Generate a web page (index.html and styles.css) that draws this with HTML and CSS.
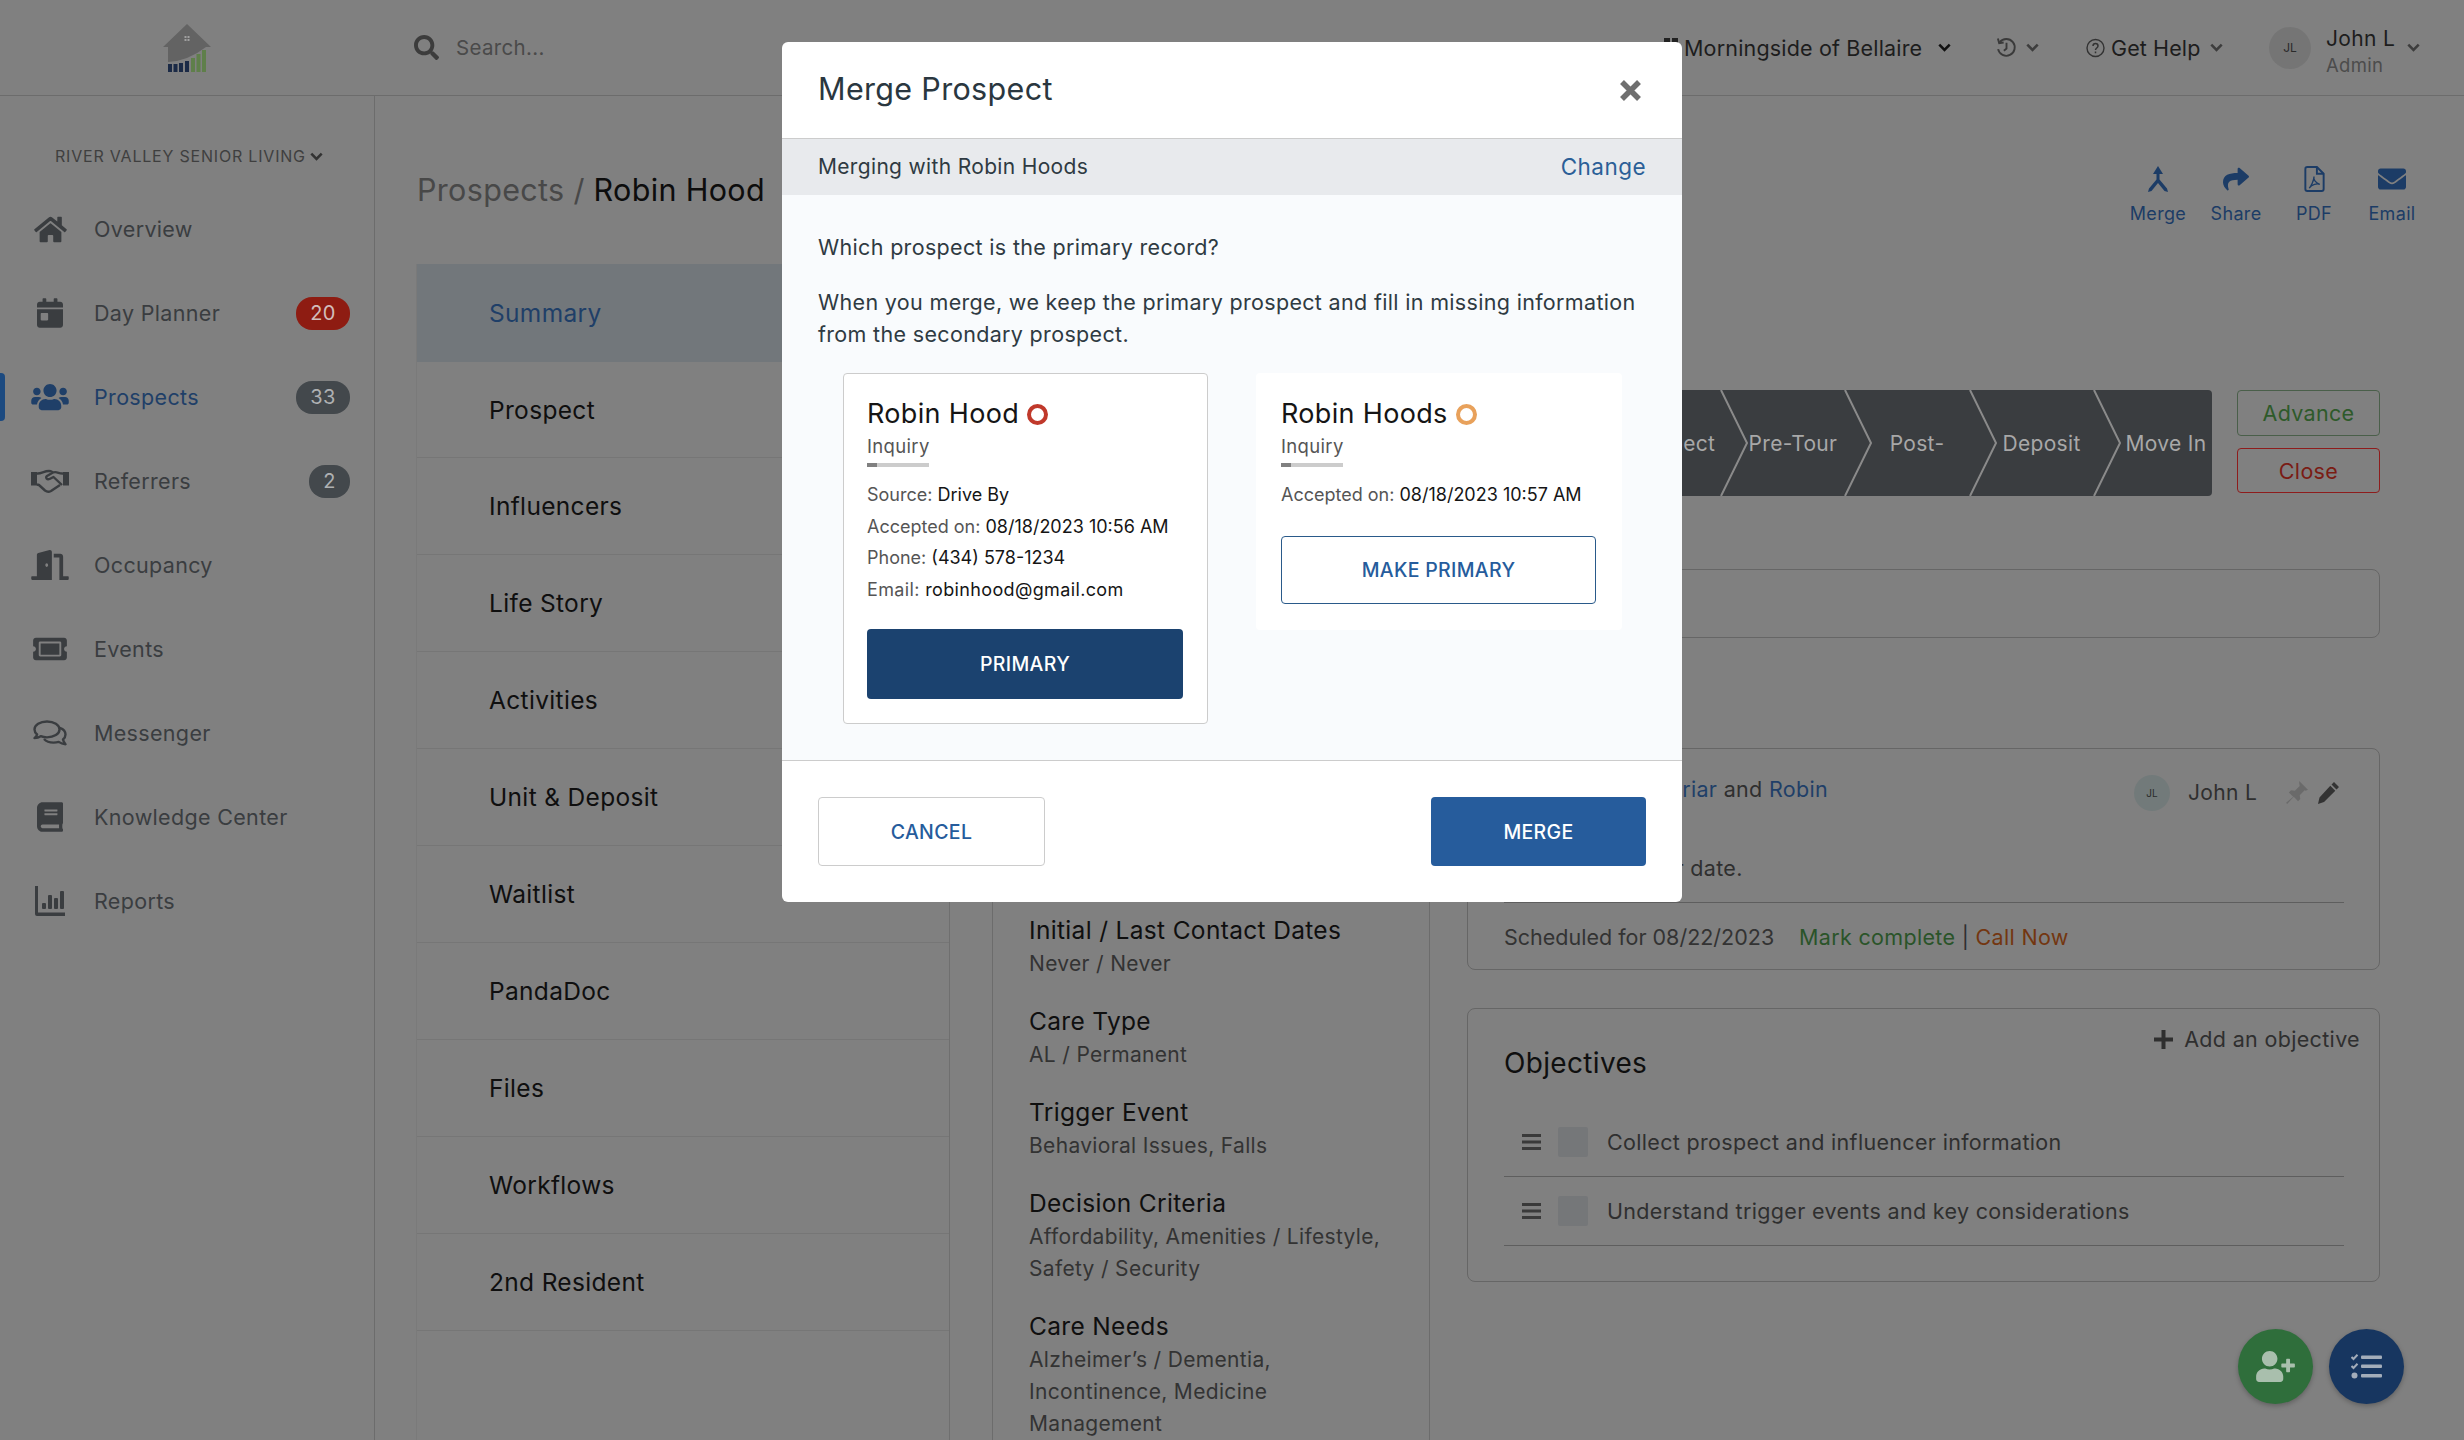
FILE: index.html
```html
<!DOCTYPE html>
<html lang="en">
<head>
<meta charset="utf-8">
<title>Merge Prospect</title>
<link rel="stylesheet" href="styles.css">
</head>
<body>
<svg class="sprite" aria-hidden="true"><symbol id="chev" viewBox="0 0 12 8"><path d="M1.2 1.4 6 6.200l4.800-4.800" fill="none" stroke="currentColor" stroke-width="2.400"/></symbol></svg>
<div class="app">
  <header class="topbar">
    <div class="logo">
      <svg width="80" height="65" viewBox="0 0 80 65"><path d="M37 9 13 32h5v15q20-1 38-15h5z" fill="#636363"/><g fill="#a0a0a0"><rect x="34.500" y="21" width="2" height="2"/><rect x="37.500" y="21" width="2" height="2"/><rect x="34.500" y="24" width="2" height="2"/><rect x="37.500" y="24" width="2" height="2"/></g><g fill="#1b2a46"><rect x="18" y="49" width="4" height="8"/><rect x="23.500" y="49" width="4" height="8"/><rect x="29" y="48" width="4" height="9"/><rect x="35" y="46" width="4" height="11"/></g><g fill="#5f7f4a"><rect x="41" y="43" width="4" height="14"/><rect x="46.500" y="39" width="4" height="18"/><rect x="52" y="35" width="4" height="22"/></g></svg>
    </div>
    <div class="search">
      <svg width="25" height="25" viewBox="0 0 512 512"><path fill="#3c3c3c" d="M505 442.700L405.300 343c-4.500-4.500-10.600-7-17-7H372c27.600-35.300 44-79.700 44-128C416 93.100 322.900 0 208 0S0 93.100 0 208s93.100 208 208 208c48.300 0 92.700-16.400 128-44v16.300c0 6.400 2.500 12.500 7 17l99.700 99.700c9.400 9.400 24.600 9.400 33.900 0l28.300-28.300c9.400-9.400 9.400-24.600.1-34zM208 336c-70.700 0-128-57.200-128-128 0-70.700 57.200-128 128-128 70.700 0 128 57.200 128 128 0 70.700-57.200 128-128 128z"/></svg>
      <span>Search...</span>
    </div>
    <nav class="topnav">
      <div class="loc">
        <svg width="16" height="20" viewBox="0 0 16 20"><rect x="1" y="0" width="6" height="20" fill="#222"/><rect x="9" y="0" width="6" height="20" fill="#222"/></svg>
        <span class="loc-name">Morningside of Bellaire</span>
        <svg class="chev dark"><use href="#chev"/></svg>
      </div>
      <div class="hist">
        <svg width="21" height="21" viewBox="0 0 20 20" fill="none" stroke="#3a3a3a" stroke-width="1.800"><path d="M3.500 5A8 8 0 1 1 2 11.500"/><path d="M1.800 1.500 3 5.800l4.300-.6"/><path d="M10 5.500V11l-2.500 2"/></svg>
        <svg class="chev"><use href="#chev"/></svg>
      </div>
      <div class="help">
        <svg width="19" height="20" viewBox="0 0 19 20"><circle cx="9.500" cy="10" r="8.500" fill="none" stroke="#333" stroke-width="1.400"/><path d="M7 8c0-3.200 5-3.200 5 0 0 2-2.500 2-2.500 4M9.500 13.600v1.600" fill="none" stroke="#333" stroke-width="1.500"/></svg>
        <span class="help-text">Get Help</span>
        <svg class="chev"><use href="#chev"/></svg>
      </div>
      <div class="user">
        <div class="avatar">JL</div>
        <div class="who"><span class="who-name">John L</span><span class="who-role">Admin</span></div>
        <svg class="chev"><use href="#chev"/></svg>
      </div>
    </nav>
  </header>

  <div class="main">
    <aside class="sidebar">
      <div class="brand">River Valley Senior Living<svg class="chev brand-chev"><use href="#chev"/></svg></div>
      <a class="nav-row"><span class="ic"><svg width="33" height="29" viewBox="0 0 576 512"><path d="M280.370 148.260L96 300.110V464a16 16 0 0 0 16 16l112.060-.29a16 16 0 0 0 15.920-16V368a16 16 0 0 1 16-16h64a16 16 0 0 1 16 16v95.640a16 16 0 0 0 16 16.050L464 480a16 16 0 0 0 16-16V300L295.670 148.260a12.190 12.190 0 0 0-15.300 0zM571.600 251.470L488 182.560V44.050a12 12 0 0 0-12-12h-56a12 12 0 0 0-12 12v72.610L318.470 43a48 48 0 0 0-61 0L4.340 251.470a12 12 0 0 0-1.600 16.900l25.500 31A12 12 0 0 0 45.150 301l235.220-193.740a12.190 12.190 0 0 1 15.300 0L530.900 301a12 12 0 0 0 16.900-1.600l25.500-31a12 12 0 0 0-1.700-16.930z"/></svg></span><span class="nav-text">Overview</span></a>
      <a class="nav-row"><span class="ic"><svg width="26" height="30" viewBox="0 0 448 512"><path d="M0 464c0 26.500 21.500 48 48 48h352c26.500 0 48-21.500 48-48V192H0v272zm64-192c0-8.800 7.200-16 16-16h96c8.800 0 16 7.200 16 16v96c0 8.800-7.200 16-16 16H80c-8.800 0-16-7.200-16-16v-96zM400 64h-48V16c0-8.800-7.200-16-16-16h-32c-8.800 0-16 7.200-16 16v48H160V16c0-8.800-7.200-16-16-16h-32c-8.800 0-16 7.200-16 16v48H48C21.500 64 0 85.500 0 112v48h448v-48c0-26.500-21.500-48-48-48z"/></svg></span><span class="nav-text">Day Planner</span><span class="badge red">20</span></a>
      <a class="nav-row active"><span class="ic"><svg width="38" height="30" viewBox="0 0 640 512"><path d="M96 224c35.300 0 64-28.700 64-64s-28.700-64-64-64-64 28.700-64 64 28.700 64 64 64zm448 0c35.300 0 64-28.700 64-64s-28.700-64-64-64-64 28.700-64 64 28.700 64 64 64zm32 32h-64c-17.600 0-33.500 7.100-45.100 18.600 40.300 22.100 68.900 62 75.100 109.400h66c17.700 0 32-14.300 32-32v-32c0-35.300-28.700-64-64-64zm-256 0c61.900 0 112-50.100 112-112S381.900 32 320 32 208 82.100 208 144s50.100 112 112 112zm76.800 32h-8.300c-20.800 10-43.900 16-68.500 16s-47.600-6-68.500-16h-8.300C179.600 288 128 339.600 128 403.200V432c0 26.500 21.500 48 48 48h288c26.500 0 48-21.500 48-48v-28.800c0-63.600-51.600-115.200-115.200-115.200zm-223.700-13.400C161.500 263.100 145.600 256 128 256H64c-35.300 0-64 28.700-64 64v32c0 17.700 14.300 32 32 32h65.900c6.300-47.400 34.900-87.300 75.200-109.400z"/></svg></span><span class="nav-text">Prospects</span><span class="badge">33</span></a>
      <a class="nav-row"><span class="ic"><svg width="38" height="24" viewBox="0 0 38 24"><g fill="none" stroke="currentColor" stroke-width="2.400" stroke-linejoin="round"><path d="M6 4.500c4 .5 7-2.500 12-2.500 2 0 3 1 4 1.500M32 4.500c-4 .5-6-2.500-10-1l-6 3.500c-2 1.500 0 4 2.500 3l4-2 8.500 8"/><path d="M6 15.500l2 .5 6 5.500c2 1.500 4 1.500 6 .5l9-6"/></g><path d="M0 3h6v13.500H0zM32 3h6v13.500h-6z"/></svg></span><span class="nav-text">Referrers</span><span class="badge small">2</span></a>
      <a class="nav-row"><span class="ic"><svg width="38" height="30" viewBox="0 0 640 512"><path d="M624 448h-80V113.450C544 86.190 522.470 64 496 64H384v64h96v384h144c8.840 0 16-7.160 16-16v-32c0-8.840-7.160-16-16-16zM312.240 1.010l-192 49.740C105.990 54.440 96 67.700 96 82.920V448H16c-8.840 0-16 7.160-16 16v32c0 8.840 7.160 16 16 16h336V33.180c0-21.580-19.560-37.410-39.760-32.170zM264 288c-13.250 0-24-14.330-24-32 0-17.670 10.750-32 24-32s24 14.330 24 32c0 17.670-10.750 32-24 32z"/></svg></span><span class="nav-text">Occupancy</span></a>
      <a class="nav-row"><span class="ic"><svg width="34" height="30" viewBox="0 0 576 512"><path d="M128 160h320v192H128V160zm400 96c0 26.510 21.490 48 48 48v96c0 26.510-21.490 48-48 48H48c-26.510 0-48-21.490-48-48v-96c26.510 0 48-21.490 48-48s-21.490-48-48-48v-96c0-26.510 21.490-48 48-48h480c26.510 0 48 21.490 48 48v96c-26.510 0-48 21.490-48 48zm-48-104c0-13.255-10.745-24-24-24H120c-13.255 0-24 10.745-24 24v208c0 13.255 10.745 24 24 24h336c13.255 0 24-10.745 24-24V152z"/></svg></span><span class="nav-text">Events</span></a>
      <a class="nav-row"><span class="ic"><svg width="34" height="27" viewBox="0 0 34 27"><g fill="none" stroke="currentColor" stroke-width="2.400" stroke-linejoin="round"><path d="M14 1.500C7 1.500 1.500 5 1.500 9.500c0 2 1 3.600 2.600 5-.4 1.500-1.500 2.700-2.600 3.600 2.500 0 4.700-.8 6.200-1.900 2 .8 4 1.200 6.300 1.200 7 0 12.500-3.500 12.500-7.900S21 1.500 14 1.500z"/><path d="M26.800 7.800c3.400 1.200 5.700 3.800 5.700 6.700 0 1.900-.9 3.600-2.500 5 .4 1.800 1.300 3.400 2.500 4.700-2.600-.1-5-1-6.800-2.300-1.600.5-3.300.7-5.200.7-4 0-7.500-1.400-9.500-3.600"/></g></svg></span><span class="nav-text">Messenger</span></a>
      <a class="nav-row"><span class="ic"><svg width="26" height="30" viewBox="0 0 448 512"><path d="M448 360V24c0-13.300-10.700-24-24-24H96C43 0 0 43 0 96v320c0 53 43 96 96 96h328c13.300 0 24-10.700 24-24v-16c0-7.500-3.500-14.300-8.900-18.700-4.200-15.400-4.200-59.300 0-74.700 5.400-4.300 8.900-11.100 8.900-18.600zM128 134c0-3.300 2.700-6 6-6h212c3.300 0 6 2.700 6 6v20c0 3.300-2.700 6-6 6H134c-3.300 0-6-2.700-6-6v-20zm0 64c0-3.300 2.700-6 6-6h212c3.300 0 6 2.700 6 6v20c0 3.300-2.700 6-6 6H134c-3.300 0-6-2.700-6-6v-20zm253.400 250H96c-17.700 0-32-14.300-32-32 0-17.600 14.400-32 32-32h285.400c-1.900 17.100-1.900 46.900 0 64z"/></svg></span><span class="nav-text">Knowledge Center</span></a>
      <a class="nav-row"><span class="ic"><svg width="30" height="30" viewBox="0 0 30 30"><path d="M0 0h3v26.500h27V30H2a2 2 0 0 1-2-2z"/><rect x="7" y="17" width="4" height="6" rx="1"/><rect x="13" y="9" width="4" height="14" rx="1"/><rect x="19" y="12" width="4" height="11" rx="1"/><rect x="25" y="5" width="4" height="18" rx="1"/></svg></span><span class="nav-text">Reports</span></a>
    </aside>

    <main class="content">
      <div class="title-row">
        <h1 class="crumb"><span class="crumb-root">Prospects /</span> Robin Hood</h1>
        <div class="actions">
          <a class="action"><svg width="20" height="26" viewBox="0 0 20 26"><path d="M10 0l5 8h-3.500v5.500L19 22.500 20 26l-3.500-1L10 17l-6.500 8L0 26l1-3.500 7.500-9V8H5z"/></svg><span>Merge</span></a>
          <a class="action"><svg width="28" height="26" viewBox="0 0 512 512"><path d="M503.691 189.836L327.687 37.851C312.281 24.546 288 35.347 288 56.015v80.053C127.371 137.907 0 170.100 0 322.326c0 61.441 39.581 122.309 83.333 154.132 13.653 9.931 33.111-2.533 28.077-18.631C66.066 312.814 132.917 274.316 288 272.085V360c0 20.700 24.300 31.453 39.687 18.164l176.004-152c11.071-9.562 11.086-26.753 0-36.328z"/></svg><span>Share</span></a>
          <a class="action"><svg width="21" height="27" viewBox="0 0 21 27"><g fill="none" stroke="currentColor"><path stroke-width="2" d="M3 1h10l7 7v16a2 2 0 0 1-2 2H3a2 2 0 0 1-2-2V3a2 2 0 0 1 2-2z"/><path stroke-width="2" d="M13 1v7h7"/><path stroke-width="1.400" d="M10 11c-1 3 2 7 6 8-3-1-8 0-11 4 2-2 5-8 5-12z"/></g></svg><span>PDF</span></a>
          <a class="action"><svg width="28" height="26" viewBox="0 56 512 400"><path d="M502.300 190.800c3.900-3.100 9.700-.2 9.700 4.700V400c0 26.500-21.500 48-48 48H48c-26.500 0-48-21.500-48-48V195.600c0-5 5.700-7.800 9.700-4.700 22.400 17.400 52.100 39.500 154.100 113.600 21.100 15.400 56.700 47.800 92.200 47.600 35.700.3 72-32.800 92.300-47.600 102-74.100 131.600-96.300 154-113.700zM256 320c23.200.4 56.600-29.200 73.400-41.400 132.700-96.300 142.800-104.700 173.400-128.700 5.800-4.500 9.200-11.500 9.200-18.900v-19c0-26.500-21.500-48-48-48H48C21.500 64 0 85.500 0 112v19c0 7.400 3.400 14.300 9.200 18.900 30.600 23.900 40.700 32.400 173.400 128.700 16.800 12.200 50.200 41.800 73.400 41.400z"/></svg><span>Email</span></a>
        </div>
      </div>

      <div class="columns">
        <ul class="subnav">
          <li class="sub current">Summary</li>
          <li class="sub">Prospect</li>
          <li class="sub">Influencers</li>
          <li class="sub">Life Story</li>
          <li class="sub">Activities</li>
          <li class="sub">Unit &amp; Deposit</li>
          <li class="sub">Waitlist</li>
          <li class="sub">PandaDoc</li>
          <li class="sub">Files</li>
          <li class="sub">Workflows</li>
          <li class="sub">2nd Resident</li>
        </ul>

        <section class="facts">
          <div class="fact"><h3>Initial / Last Contact Dates</h3><p>Never / Never</p></div>
          <div class="fact"><h3>Care Type</h3><p>AL / Permanent</p></div>
          <div class="fact"><h3>Trigger Event</h3><p>Behavioral Issues, Falls</p></div>
          <div class="fact"><h3>Decision Criteria</h3><p>Affordability, Amenities / Lifestyle, Safety / Security</p></div>
          <div class="fact"><h3>Care Needs</h3><p>Alzheimer’s / Dementia, Incontinence, Medicine Management</p></div>
        </section>

        <section class="detail">
          <div class="stage-row">
            <div class="pipeline">
              <div class="stage"><svg class="arrow" width="28" height="106" viewBox="0 0 28 106"><polyline points="1,0 27,53 1,106"/></svg><span class="stage-text">Prospect</span></div>
              <div class="stage"><svg class="arrow" width="28" height="106" viewBox="0 0 28 106"><polyline points="1,0 27,53 1,106"/></svg><span class="stage-text">Pre-Tour</span></div>
              <div class="stage"><svg class="arrow" width="28" height="106" viewBox="0 0 28 106"><polyline points="1,0 27,53 1,106"/></svg><span class="stage-text">Post-</span></div>
              <div class="stage"><svg class="arrow" width="28" height="106" viewBox="0 0 28 106"><polyline points="1,0 27,53 1,106"/></svg><span class="stage-text">Deposit</span></div>
              <div class="stage last"><svg class="arrow" width="28" height="106" viewBox="0 0 28 106"><polyline points="1,0 27,53 1,106"/></svg><span class="stage-text">Move In</span></div>
            </div>
            <div class="stage-btns">
              <button class="ghost green">Advance</button>
              <button class="ghost red-line">Close</button>
            </div>
          </div>

          <div class="box blank"></div>

          <div class="box task">
            <div class="task-top">
              <div class="task-title">Follow up with <a class="link">Briar</a> and <a class="link">Robin</a></div>
              <div class="avatar mini">JL</div>
              <span class="task-user">John L</span>
              <svg class="pin" width="22" height="24" viewBox="0 0 20 22"><path fill="#6a6a6a" d="M12 0l8 8-2 1-1-.5-4.500 4.500.5 3.500-2 2-4-4L1 21l-1-1 6.500-5.500-4-4 2-2 3.500.5L12.500 4.500 12 2z"/></svg>
              <svg class="pencil" width="21" height="22" viewBox="0 0 21 22"><path fill="#333" d="M16 0l5 5-2.500 2.500-5-5zM12.300 3.700l5 5L6 20l-6 2 1.500-6.500z"/></svg>
            </div>
            <p class="task-body">Confirm the tour date.</p>
            <div class="task-foot"><span class="sched">Scheduled for 08/22/2023</span><a class="done">Mark complete</a> | <a class="call">Call Now</a></div>
          </div>

          <div class="box objectives">
            <div class="obj-head">
              <h2>Objectives</h2>
              <a class="add"><svg width="19" height="19" viewBox="0 0 19 19"><path fill="#2f2f2f" d="M7.500 0h4v7.500H19v4h-7.500V19h-4v-7.500H0v-4h7.500z"/></svg>Add an objective</a>
            </div>
            <div class="obj-row"><svg class="grip" width="19" height="16" viewBox="0 0 19 16"><path fill="#3a3a3a" d="M0 0h19v3H0zM0 6.500h19v3H0zM0 13h19v3H0z"/></svg><span class="check"></span><span>Collect prospect and influencer information</span></div>
            <div class="obj-row"><svg class="grip" width="19" height="16" viewBox="0 0 19 16"><path fill="#3a3a3a" d="M0 0h19v3H0zM0 6.500h19v3H0zM0 13h19v3H0z"/></svg><span class="check"></span><span>Understand trigger events and key considerations</span></div>
          </div>
        </section>
      </div>
    </main>
  </div>

  <div class="fabs">
    <a class="fab fab-green"><svg width="39" height="31" viewBox="0 0 640 512"><path fill="#a9bfad" d="M624 208h-64v-64c0-8.800-7.200-16-16-16h-32c-8.800 0-16 7.200-16 16v64h-64c-8.800 0-16 7.200-16 16v32c0 8.800 7.200 16 16 16h64v64c0 8.800 7.200 16 16 16h32c8.800 0 16-7.200 16-16v-64h64c8.800 0 16-7.200 16-16v-32c0-8.800-7.200-16-16-16zm-400 48c70.700 0 128-57.300 128-128S294.700 0 224 0 96 57.300 96 128s57.300 128 128 128zm89.600 32h-16.700c-22.200 10.200-46.900 16-72.900 16s-50.600-5.800-72.900-16h-16.700C60.200 288 0 348.200 0 422.400V464c0 26.500 21.500 48 48 48h352c26.500 0 48-21.500 48-48v-41.600c0-74.200-60.200-134.400-134.400-134.400z"/></svg></a>
    <a class="fab fab-navy"><svg width="31" height="25" viewBox="0 0 31 25"><g fill="#a3adba"><rect x="10" y="1.500" width="21" height="3.500" rx="1"/><rect x="10" y="10.500" width="21" height="3.500" rx="1"/><rect x="10" y="20" width="21" height="3.500" rx="1"/><circle cx="3.500" cy="21.500" r="3"/></g><g fill="none" stroke="#a3adba" stroke-width="2"><path d="M.5 3l2 2L6.500.8M.5 12l2 2 4-4.200"/></g></svg></a>
  </div>

  <div class="modal" role="dialog">
    <div class="modal-head">
      <h2>Merge Prospect</h2>
      <svg class="close" width="21" height="21" viewBox="0 0 21 21"><path d="M2 2l17 17M19 2L2 19" stroke="#6f6f6f" stroke-width="5.500"/></svg>
    </div>
    <div class="modal-strip"><span>Merging with Robin Hoods</span><a class="change">Change</a></div>
    <div class="modal-body">
      <p>Which prospect is the primary record?</p>
      <p>When you merge, we keep the primary prospect and fill in missing information from the secondary prospect.</p>
      <div class="cards">
        <div class="card selected">
          <div class="card-name">Robin Hood <span class="ring ring-red"></span></div>
          <div class="card-stage">Inquiry</div>
          <div class="meter"><span class="meter-fill"></span></div>
          <ul class="card-lines">
            <li>Source: <b>Drive By</b></li>
            <li>Accepted on: <b>08/18/2023 10:56 AM</b></li>
            <li>Phone: <b>(434) 578-1234</b></li>
            <li class="email">Email: <b>robinhood@gmail.com</b></li>
          </ul>
          <button class="btn solid-navy">PRIMARY</button>
        </div>
        <div class="card other">
          <div class="card-name">Robin Hoods <span class="ring ring-orange"></span></div>
          <div class="card-stage">Inquiry</div>
          <div class="meter"><span class="meter-fill"></span></div>
          <ul class="card-lines">
            <li>Accepted on: <b>08/18/2023 10:57 AM</b></li>
          </ul>
          <button class="btn outline-blue">MAKE PRIMARY</button>
        </div>
      </div>
    </div>
    <div class="modal-foot">
      <button class="btn cancel">CANCEL</button>
      <button class="btn merge">MERGE</button>
    </div>
  </div>
</div>
</body>
</html>
```

FILE: styles.css
```css
* { box-sizing: border-box; }
html, body { margin: 0; padding: 0; }
body {
  background: #808080;
  font-family: Inter, "Noto Sans", "Liberation Sans", sans-serif;
  font-size: 22px;
  letter-spacing: .015em;
  color: #2f2f2f;
}
h1, h2, h3, p, ul { margin: 0; padding: 0; font-weight: 400; }
ul { list-style: none; }
a { color: inherit; text-decoration: none; }
button { font-family: inherit; letter-spacing: inherit; cursor: pointer; }
.sprite { position: absolute; width: 0; height: 0; }

.app { position: relative; width: 2464px; height: 1440px; overflow: hidden; display: flex; flex-direction: column; }

/* top bar */
.topbar { flex: none; height: 96px; display: flex; align-items: center; border-bottom: 1px solid #6c6c6c; }
.logo { width: 379px; display: flex; justify-content: center; }
.search { display: flex; align-items: center; gap: 17px; margin-left: 35px; font-size: 20.500px; color: #4a4a4a; }
.topnav { margin-left: auto; margin-right: 44px; display: flex; align-items: center; color: #1d1d1d; font-size: 21.500px; }
.chev { width: 13px; height: 9px; color: #3d3d3d; flex: none; }
.chev.dark { color: #111; }
.loc, .hist, .help, .user { display: flex; align-items: center; }
.loc { gap: 5px; margin-right: 45px; }
.loc-name { width: 234px; white-space: nowrap; margin-right: 15px; letter-spacing: .008em; }
.hist { gap: 9px; margin-right: 47px; }
.help { margin-right: 46px; }
.help-text { width: 90px; margin: 0 9px 0 6px; white-space: nowrap; letter-spacing: .005em; font-size: 21.500px; }
.user { gap: 15px; }
.avatar { width: 42px; height: 42px; border-radius: 50%; background: #757575; color: #2a2a2a; font-size: 12px; display: flex; align-items: center; justify-content: center; flex: none; letter-spacing: 0; }
.who { width: 81px; margin: 8px -15px 0 0; display: flex; flex-direction: column; line-height: 27px; }
.who-name { font-size: 21px; color: #1d1d1d; }
.who-role { font-size: 18.500px; color: #4c4c4c; }

/* layout */
.main { flex: 1; display: flex; min-height: 0; }
.sidebar { flex: none; width: 375px; border-right: 1px solid #6c6c6c; padding-top: 48px; color: #3a3d40; }
.brand { height: 24px; margin-bottom: 19px; display: flex; align-items: center; padding-left: 55px; font-size: 16px; letter-spacing: .05em; text-transform: uppercase; color: #3f3f3f; white-space: nowrap; }
.brand-chev { margin-left: 4px; width: 13px; height: 9px; color: #333; }
.nav-row { position: relative; height: 84px; display: flex; align-items: center; padding: 0 24px 0 30px; }
.ic { width: 40px; margin-right: 24px; display: flex; justify-content: center; flex: none; }
.ic svg { fill: currentColor; }
.nav-text { flex: 1; font-size: 21.500px; white-space: nowrap; }
.nav-row.active { color: #1f3f68; }
.nav-row.active::before { content: ""; position: absolute; left: 0; top: 18px; width: 5px; height: 48px; background: #1c4a80; border-radius: 0 4px 4px 0; }
.badge { width: 54px; height: 33px; border-radius: 16px; background: #43484c; color: #aeb0b2; display: flex; align-items: center; justify-content: center; font-size: 20px; }
.badge.red { background: #8e1c12; color: #d2bdbb; }
.badge.small { width: 41px; }

.content { flex: 1; min-width: 0; padding: 0 85px 0 42px; display: flex; flex-direction: column; }
.title-row { flex: none; height: 168px; padding-top: 70px; display: flex; justify-content: space-between; align-items: flex-start; }
.crumb { font-size: 30.500px; line-height: 44px; color: #0d0d0d; margin-top: 2px; white-space: nowrap; }
.crumb-root { color: #484848; }
.actions { display: flex; margin-right: -52px; }
.action { width: 78px; display: flex; flex-direction: column; align-items: center; color: #1c3c66; font-size: 18px; }
.action svg { fill: currentColor; height: 26px; }
.action span { line-height: 28px; margin-top: 8px; }

.columns { flex: 1; min-height: 0; display: grid; grid-template-columns: 533px 438px 912px; column-gap: 42px; }
.columns > * { min-width: 0; }

.subnav { border-left: 1px solid #7a7a7a; border-right: 1px solid #6f6f6f; margin-left: -1px; }
.sub { height: 97px; display: flex; align-items: center; padding-left: 72px; font-size: 24.500px; color: #0f0f0f; border-bottom: 1px solid #767676; }
.sub.current { background: #72777b; color: #1f3f68; border-bottom: 0; height: 98px; }
.sub.current + .sub { height: 96px; }

.facts { border: 1px solid #6c6c6c; border-width: 0 1px; padding: 649px 30px 0 36px; }
.fact { margin-bottom: 24px; }
.fact h3 { font-size: 24.500px; line-height: 34px; color: #0f0f0f; }
.fact p { font-size: 21px; line-height: 32px; color: #333; margin-top: 1px; }

.detail { margin-left: -5px; width: 913px; padding-top: 126px; }
.stage-row { display: flex; gap: 25px; height: 106px; }
.pipeline { width: 745px; background: #3a3d40; border-radius: 4px; display: flex; justify-content: flex-end; overflow: hidden; }
.stage { position: relative; flex: none; width: 124.500px; height: 106px; padding-left: 29px; display: flex; align-items: center; }
.stage.last { width: 119px; }
.arrow { position: absolute; left: 0; top: 0; fill: none; stroke: #8a8a8a; stroke-width: 2; }
.stage-text { width: 88px; white-space: nowrap; text-align: center; color: #a8a8a8; font-size: 21px; }
.stage-btns { width: 143px; display: flex; flex-direction: column; gap: 12px; }
.ghost { height: 46px; background: transparent; border-radius: 4px; border: 1px solid #4a5f4a; font-size: 21.500px; color: #2e5a2a; padding: 0; }
.ghost.red-line { height: 45px; border-color: #8e1c1c; color: #7a1c14; }

.box { border: 1px solid #666; border-radius: 8px; }
.blank { height: 69px; margin-top: 73px; }
.task { margin-top: 110px; height: 222px; padding: 26px 35px 0 36px; }
.task-top { display: flex; align-items: center; height: 36px; }
.task-title { width: 630px; font-size: 21.500px; white-space: nowrap; margin: -8px -7px 0 7px; flex: none; }
.link { color: #1f3f68; }
.avatar.mini { width: 36px; height: 36px; background: #727a7a; font-size: 10px; }
.task-user { margin: -2px 0 0 18px; width: 98px; font-size: 21px; }
.pin { margin-right: 10px; }
.task-body { margin-top: 41px; line-height: 32px; padding-bottom: 18px; border-bottom: 1px solid #5e5e5e; font-size: 21.500px; text-indent: 8px; }
.task-foot { margin-top: 18px; line-height: 32px; font-size: 21.500px; white-space: nowrap; }
.sched { display: inline-block; width: 295px; color: #333; letter-spacing: 0; }
.done { color: #2a5429; }
.call { color: #733610; }

.objectives { margin-top: 38px; height: 274px; padding: 16px 35px 0 36px; }
.obj-head { display: flex; justify-content: space-between; align-items: flex-start; margin-right: -16px; height: 56px; }
.obj-head h2 { font-size: 28px; line-height: 36px; margin-top: 20px; color: #0f0f0f; }
.add { display: flex; align-items: center; gap: 11px; line-height: 28px; font-size: 21.500px; color: #2f2f2f; }
.obj-row { height: 69px; display: flex; align-items: center; border-bottom: 1px solid #5e5e5e; font-size: 21.500px; color: #2f2f2f; }
.obj-head + .obj-row { margin-top: 27px; }
.grip { margin-left: 18px; margin-right: 17px; flex: none; }
.check { width: 30px; height: 30px; background: #757779; border-radius: 2px; margin-right: 19px; flex: none; }

.fabs { position: absolute; right: 60px; bottom: 36px; display: flex; gap: 16px; }
.fab { width: 75px; height: 75px; border-radius: 50%; display: flex; align-items: center; justify-content: center; box-shadow: 0 2px 5px rgba(0, 0, 0, .25); }
.fab-green { background: #2f6e3b; }
.fab-navy { background: #173660; }

/* modal */
.modal { position: absolute; left: 782px; top: 42px; width: 900px; height: 860px; background: #fff; border-radius: 6px; overflow: hidden; color: #2f3a42; display: flex; flex-direction: column; }
.modal-head { flex: none; height: 97px; padding: 0 41px 0 36px; border-bottom: 1px solid #ccc; display: flex; align-items: center; justify-content: space-between; }
.modal-head h2 { font-size: 30.500px; color: #2a3740; margin-top: -4px; }
.modal-strip { flex: none; height: 56px; padding: 0 36px 2px; background: #e8eaed; display: flex; align-items: center; justify-content: space-between; font-size: 21px; }
.change { color: #2b5f97; font-size: 22.500px; letter-spacing: .02em; }
.modal-body { flex: none; height: 565px; background: #f9fbfd; padding: 36px 36px 0; font-size: 21.500px; line-height: 32px; }
.modal-body > p { margin-bottom: 23px; }
.cards { display: flex; align-items: flex-start; gap: 48px; margin-left: 25px; }
.card { background: #fff; border-radius: 4px; line-height: 1; }
.selected { width: 365px; border: 1px solid #ccc; padding: 22px 24px 24px 23px; }
.other { width: 366px; padding: 23px 25px 26px; }
.card-name { display: flex; align-items: center; gap: 8px; font-size: 27px; line-height: 36px; color: #151515; white-space: nowrap; }
.ring { width: 21px; height: 21px; border-radius: 50%; border: 4px solid; flex: none; }
.ring-red { border-color: #c0392b; }
.ring-orange { border-color: #e8a15b; }
.card-stage { margin-top: 1px; font-size: 18.500px; line-height: 26px; color: #555; }
.meter { width: 62px; height: 4px; margin-top: 4px; background: #ccc; }
.meter-fill { display: block; width: 10px; height: 4px; background: #808080; }
.card-lines { margin-top: 12px; }
.card-lines li { font-size: 18px; line-height: 31.500px; color: #555; white-space: nowrap; letter-spacing: 0; }
.card-lines .email { letter-spacing: .02em; }
.card-lines b { font-weight: 400; color: #151515; }
.btn { border-radius: 4px; font-size: 19.500px; font-weight: 500; padding: 0; }
.solid-navy { width: 316px; height: 70px; margin-top: 24px; background: #1b426f; color: #fff; border: 0; }
.outline-blue { width: 315px; height: 68px; margin-top: 25px; background: #fff; color: #265c9c; border: 1px solid #2a5a8a; }
.modal-foot { flex: 1; border-top: 1px solid #ccc; padding: 36px; display: flex; justify-content: space-between; align-items: flex-start; }
.cancel { width: 227px; height: 69px; background: #fff; color: #265c9c; border: 1px solid #ccc; }
.merge { width: 215px; height: 69px; background: #265c9c; color: #fff; border: 0; }
```
